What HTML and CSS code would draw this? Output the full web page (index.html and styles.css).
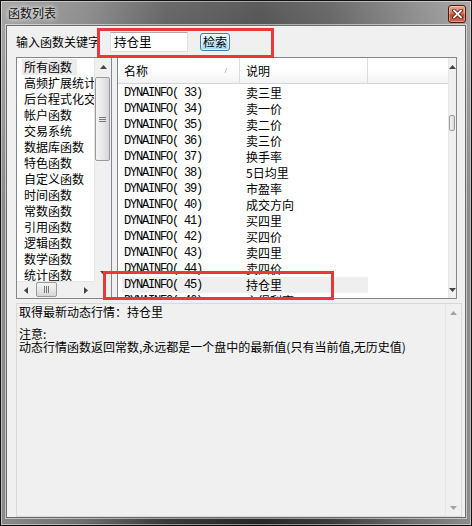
FILE: index.html
```html
<!DOCTYPE html>
<html lang="zh-CN">
<head>
    <meta charset="UTF-8">
    <title>函数列表</title>
    <link rel="stylesheet" href="styles.css">
</head>
<body>
    <div class="window">
        <div class="titlebar">
            <span class="title">函数列表</span>
            <span class="close">
                <svg width="11" height="10" viewBox="0 0 11 10">
                    <path d="M2 1.5 L9 8.5 M9 1.5 L2 8.5" stroke="#4a1a10" stroke-width="3.4" stroke-linecap="square"/>
                    <path d="M2 1.5 L9 8.5 M9 1.5 L2 8.5" stroke="#fff" stroke-width="1.8" stroke-linecap="square"/>
                </svg>
            </span>
        </div>

        <div class="client">
            <div class="search-row">
                <span class="search-label">输入函数关键字</span>
                <div class="search-input">持仓里</div>
                <button class="search-btn">检索</button>
            </div>

            <div class="lists">
                <!-- category list -->
                <div class="listbox">
                    <div class="listbox-items">
                        <div class="item"><span class="sel">所有函数</span></div>
                        <div class="item">高频扩展统计函数</div>
                        <div class="item">后台程式化交易函数</div>
                        <div class="item">帐户函数</div>
                        <div class="item">交易系统</div>
                        <div class="item">数据库函数</div>
                        <div class="item">特色函数</div>
                        <div class="item">自定义函数</div>
                        <div class="item">时间函数</div>
                        <div class="item">常数函数</div>
                        <div class="item">引用函数</div>
                        <div class="item">逻辑函数</div>
                        <div class="item">数学函数</div>
                        <div class="item">统计函数</div>
                        <div class="item">形态函数</div>
                    </div>
                    <div class="vscroll">
                        <div class="arrow"><svg width="7" height="4"><polygon points="0,4 3.5,0 7,4" fill="#444"/></svg></div>
                        <div class="track">
                            <div class="thumb thumb-left"><i></i><i></i><i></i></div>
                        </div>
                        <div class="arrow"><svg width="7" height="4"><polygon points="0,0 7,0 3.5,4" fill="#444"/></svg></div>
                    </div>
                    <div class="hscroll">
                        <div class="arrow"><svg width="4" height="7"><polygon points="4,0 4,7 0,3.5" fill="#444"/></svg></div>
                        <div class="htrack">
                            <div class="hthumb"><i></i><i></i><i></i></div>
                        </div>
                        <div class="arrow"><svg width="4" height="7"><polygon points="0,0 4,3.5 0,7" fill="#444"/></svg></div>
                    </div>
                    <div class="corner"></div>
                </div>

                <!-- function list -->
                <div class="listview">
                    <div class="lv-body">
                        <div class="lv-header">
                            <div class="col col-name">名称<span class="sort">/</span></div>
                            <div class="col col-desc">说明</div>
                            <div class="col col-rest"></div>
                        </div>
                        <div class="lv-rows">
                            <div class="row"><span class="name">DYNAINFO( 33)</span><span class="desc-cell">卖三里</span></div>
                            <div class="row"><span class="name">DYNAINFO( 34)</span><span class="desc-cell">卖一价</span></div>
                            <div class="row"><span class="name">DYNAINFO( 35)</span><span class="desc-cell">卖二价</span></div>
                            <div class="row"><span class="name">DYNAINFO( 36)</span><span class="desc-cell">卖三价</span></div>
                            <div class="row"><span class="name">DYNAINFO( 37)</span><span class="desc-cell">换手率</span></div>
                            <div class="row"><span class="name">DYNAINFO( 38)</span><span class="desc-cell">5日均里</span></div>
                            <div class="row"><span class="name">DYNAINFO( 39)</span><span class="desc-cell">市盈率</span></div>
                            <div class="row"><span class="name">DYNAINFO( 40)</span><span class="desc-cell">成交方向</span></div>
                            <div class="row"><span class="name">DYNAINFO( 41)</span><span class="desc-cell">买四里</span></div>
                            <div class="row"><span class="name">DYNAINFO( 42)</span><span class="desc-cell">买四价</span></div>
                            <div class="row"><span class="name">DYNAINFO( 43)</span><span class="desc-cell">卖四里</span></div>
                            <div class="row"><span class="name">DYNAINFO( 44)</span><span class="desc-cell">卖四价</span></div>
                            <div class="row selected"><span class="name">DYNAINFO( 45)</span><span class="desc-cell">持仓里</span></div>
                            <div class="row"><span class="name">DYNAINFO( 46)</span><span class="desc-cell">主得利率</span></div>
                        </div>
                    </div>
                    <div class="vscroll">
                        <div class="arrow"><svg width="7" height="4"><polygon points="0,4 3.5,0 7,4" fill="#444"/></svg></div>
                        <div class="track">
                            <div class="thumb thumb-right"></div>
                        </div>
                        <div class="arrow"><svg width="7" height="4"><polygon points="0,0 7,0 3.5,4" fill="#444"/></svg></div>
                    </div>
                </div>
            </div>

            <div class="desc">
                <div class="desc-text">
                    <p class="first">取得最新动态行情：持仓里</p>
                    <p>注意:</p>
                    <p>动态行情函数返回常数,永远都是一个盘中的最新值(只有当前值,无历史值)</p>
                </div>
                <div class="vscroll disabled">
                    <div class="arrow"><svg width="7" height="4"><polygon points="0,4 3.5,0 7,4" fill="#a3a3a3"/></svg></div>
                    <div class="track"></div>
                    <div class="arrow"><svg width="7" height="4"><polygon points="0,0 7,0 3.5,4" fill="#a3a3a3"/></svg></div>
                </div>
            </div>
        </div>

        <div class="mark mark-search"></div>
        <div class="mark mark-row"></div>
    </div>
</body>
</html>
```

FILE: styles.css
```css
* {
    margin: 0;
    padding: 0;
    box-sizing: border-box;
}

body {
    width: 472px;
    height: 526px;
    overflow: hidden;
    background: #222;
    font-family: "Noto Sans CJK SC", "Liberation Sans", sans-serif;
    font-size: 12px;
    color: #000;
}

.window {
    position: relative;
    width: 472px;
    height: 526px;
    display: flex;
    flex-direction: column;
    border: 1px solid #111;
    background:
        linear-gradient(180deg, rgba(255, 255, 255, 0.25) 0%, rgba(255, 255, 255, 0) 40%),
        linear-gradient(90deg, #8a8a8a 0%, #6d6d6d 18%, #3a3a3a 35%, #262626 55%, #3c3c3c 70%, #6e6e6e 88%, #8c8c8c 100%);
    box-shadow: inset 0 0 0 1px rgba(255, 255, 255, 0.45);
}

/* title bar */
.titlebar {
    height: 24px;
    display: flex;
    align-items: center;
    padding-left: 7px;
}

.title {
    font-size: 12px;
    line-height: 14px;
    color: #111;
    text-shadow: 0 0 4px #fff, 0 0 6px rgba(255, 255, 255, 0.8);
}

.close {
    margin-left: auto;
    margin-right: 5px;
    align-self: flex-start;
    margin-top: 4px;
    width: 18px;
    height: 18px;
    display: flex;
    justify-content: center;
    align-items: center;
    border: 1px solid #4d1a12;
    border-radius: 3px;
    background: linear-gradient(180deg, #e8a795 0%, #d87860 45%, #c24a2f 55%, #d0664a 100%);
    box-shadow: inset 0 0 0 1px rgba(255, 255, 255, 0.35);
}

/* client area */
.client {
    flex: 1;
    margin: 0 5px 7px 5px;
    background: #f0f0f0;
    border: 1px solid #6c6c6c;
    box-shadow: 0 0 0 1px rgba(255, 255, 255, 0.5);
    padding: 6px 3px 0 9px;
    display: flex;
    flex-direction: column;
}

.search-row {
    display: flex;
    align-items: center;
    height: 20px;
}

.search-label {
    width: 94px;
    line-height: 14px;
    white-space: nowrap;
}

.search-input {
    width: 78px;
    height: 20px;
    background: #fff;
    border: 1px solid #dbdfe6;
    border-top-color: #abadb3;
    padding-left: 3px;
    line-height: 18px;
    font-size: 12.5px;
}

.search-btn {
    margin-left: 12px;
    width: 30px;
    height: 18px;
    font-family: inherit;
    font-size: 12px;
    line-height: 14px;
    color: #000;
    border: 1px solid #3c7fb1;
    border-radius: 3px;
    background: linear-gradient(180deg, #eaf6fd 0%, #d9f0fc 45%, #bee6fd 50%, #a7d9f5 100%);
    box-shadow: inset 0 0 0 1px rgba(255, 255, 255, 0.6);
}

.lists {
    display: flex;
    gap: 5px;
    height: 242px;
    margin-top: 5px;
}

/* left list box */
.listbox {
    width: 96px;
    border: 1px solid #828790;
    background: #fff;
    display: grid;
    grid-template-columns: 1fr 17px;
    grid-template-rows: 1fr 17px;
    overflow: hidden;
}

.listbox-items {
    overflow: hidden;
    padding-top: 1px;
}

.item {
    height: 16px;
    line-height: 16px;
    padding-left: 7px;
    white-space: nowrap;
}

.item .sel {
    display: inline-block;
    margin-left: -2px;
    padding: 0 5px 0 2px;
    background: #ebebeb;
}

/* scroll bars */
.vscroll {
    display: flex;
    flex-direction: column;
    background: #f0f0f0;
    border-left: 1px solid #e6e6e6;
}

.vscroll .arrow {
    height: 17px;
    display: flex;
    justify-content: center;
    align-items: center;
}

.vscroll .track {
    flex: 1;
}

.thumb {
    margin: 0 1px 0 0;
    border: 1px solid #9a9a9a;
    border-radius: 2px;
    background: linear-gradient(90deg, #f4f4f4 0%, #e8e8e8 50%, #d6d6d6 100%);
    display: flex;
    flex-direction: column;
    justify-content: center;
    align-items: center;
    gap: 1px;
}

.thumb i {
    display: block;
    width: 7px;
    height: 1px;
    background: #777;
}

.thumb-left {
    margin-top: 2px;
    height: 84px;
}

.thumb-right {
    margin-top: 40px;
    height: 16px;
}

.hscroll {
    display: flex;
    align-items: center;
    background: #f0f0f0;
    border-top: 1px solid #e6e6e6;
}

.hscroll .arrow {
    width: 17px;
    height: 16px;
    display: flex;
    justify-content: center;
    align-items: center;
}

.htrack {
    flex: 1;
    height: 16px;
}

.hthumb {
    margin-left: 2px;
    width: 21px;
    height: 15px;
    border: 1px solid #9a9a9a;
    border-radius: 2px;
    background: linear-gradient(180deg, #f4f4f4 0%, #e8e8e8 50%, #d6d6d6 100%);
    display: flex;
    justify-content: center;
    align-items: center;
    gap: 1px;
}

.hthumb i {
    display: block;
    width: 1px;
    height: 7px;
    background: #777;
}

.corner {
    background: #f0f0f0;
}

/* right list view */
.listview {
    width: 340px;
    border: 1px solid #828790;
    background: #fff;
    display: flex;
    overflow: hidden;
}

.lv-body {
    flex: 1;
    overflow: hidden;
}

.lv-header {
    display: flex;
    height: 26px;
    border-bottom: 1px solid #d5d5d5;
    background: linear-gradient(180deg, #fff 0%, #fff 45%, #f2f3f5 100%);
}

.col {
    display: flex;
    align-items: center;
    padding-left: 6px;
    line-height: 14px;
    border-right: 1px solid #dcdcdc;
}

.col-name {
    width: 122px;
    justify-content: space-between;
    padding-right: 12px;
}

.col-desc {
    width: 128px;
}

.col-rest {
    flex: 1;
    border-right: none;
}

.sort {
    font-family: "Liberation Sans", sans-serif;
    font-size: 8px;
    color: #9a9a9a;
}

.lv-rows {
    padding-top: 1px;
}

.row {
    display: flex;
    width: 246px;
    height: 16px;
    margin-left: 4px;
    line-height: 16px;
    white-space: nowrap;
}

.row.selected {
    background: #efefef;
}

.name {
    width: 118px;
    padding-left: 2px;
    font-family: "Liberation Mono", monospace;
    font-size: 12px;
    letter-spacing: -1.2px;
}

.desc-cell {
    padding-left: 6px;
}

/* description box */
.desc {
    flex: 1;
    margin-top: 4px;
    border: 1px solid #d9d9d9;
    background: #f0f0f0;
    display: flex;
}

.desc-text {
    flex: 1;
    padding: 1px 0 0 2px;
}

.desc-text p {
    line-height: 13px;
    white-space: nowrap;
}

.desc-text p.first {
    line-height: 14px;
    margin-bottom: 8px;
}

.vscroll.disabled {
    width: 16px;
}

/* red annotation boxes */
.mark {
    position: absolute;
    border: 3px solid #e8383a;
}

.mark-search {
    left: 96px;
    top: 27px;
    width: 177px;
    height: 30px;
}

.mark-row {
    left: 102px;
    top: 270px;
    width: 231px;
    height: 29px;
}
```
